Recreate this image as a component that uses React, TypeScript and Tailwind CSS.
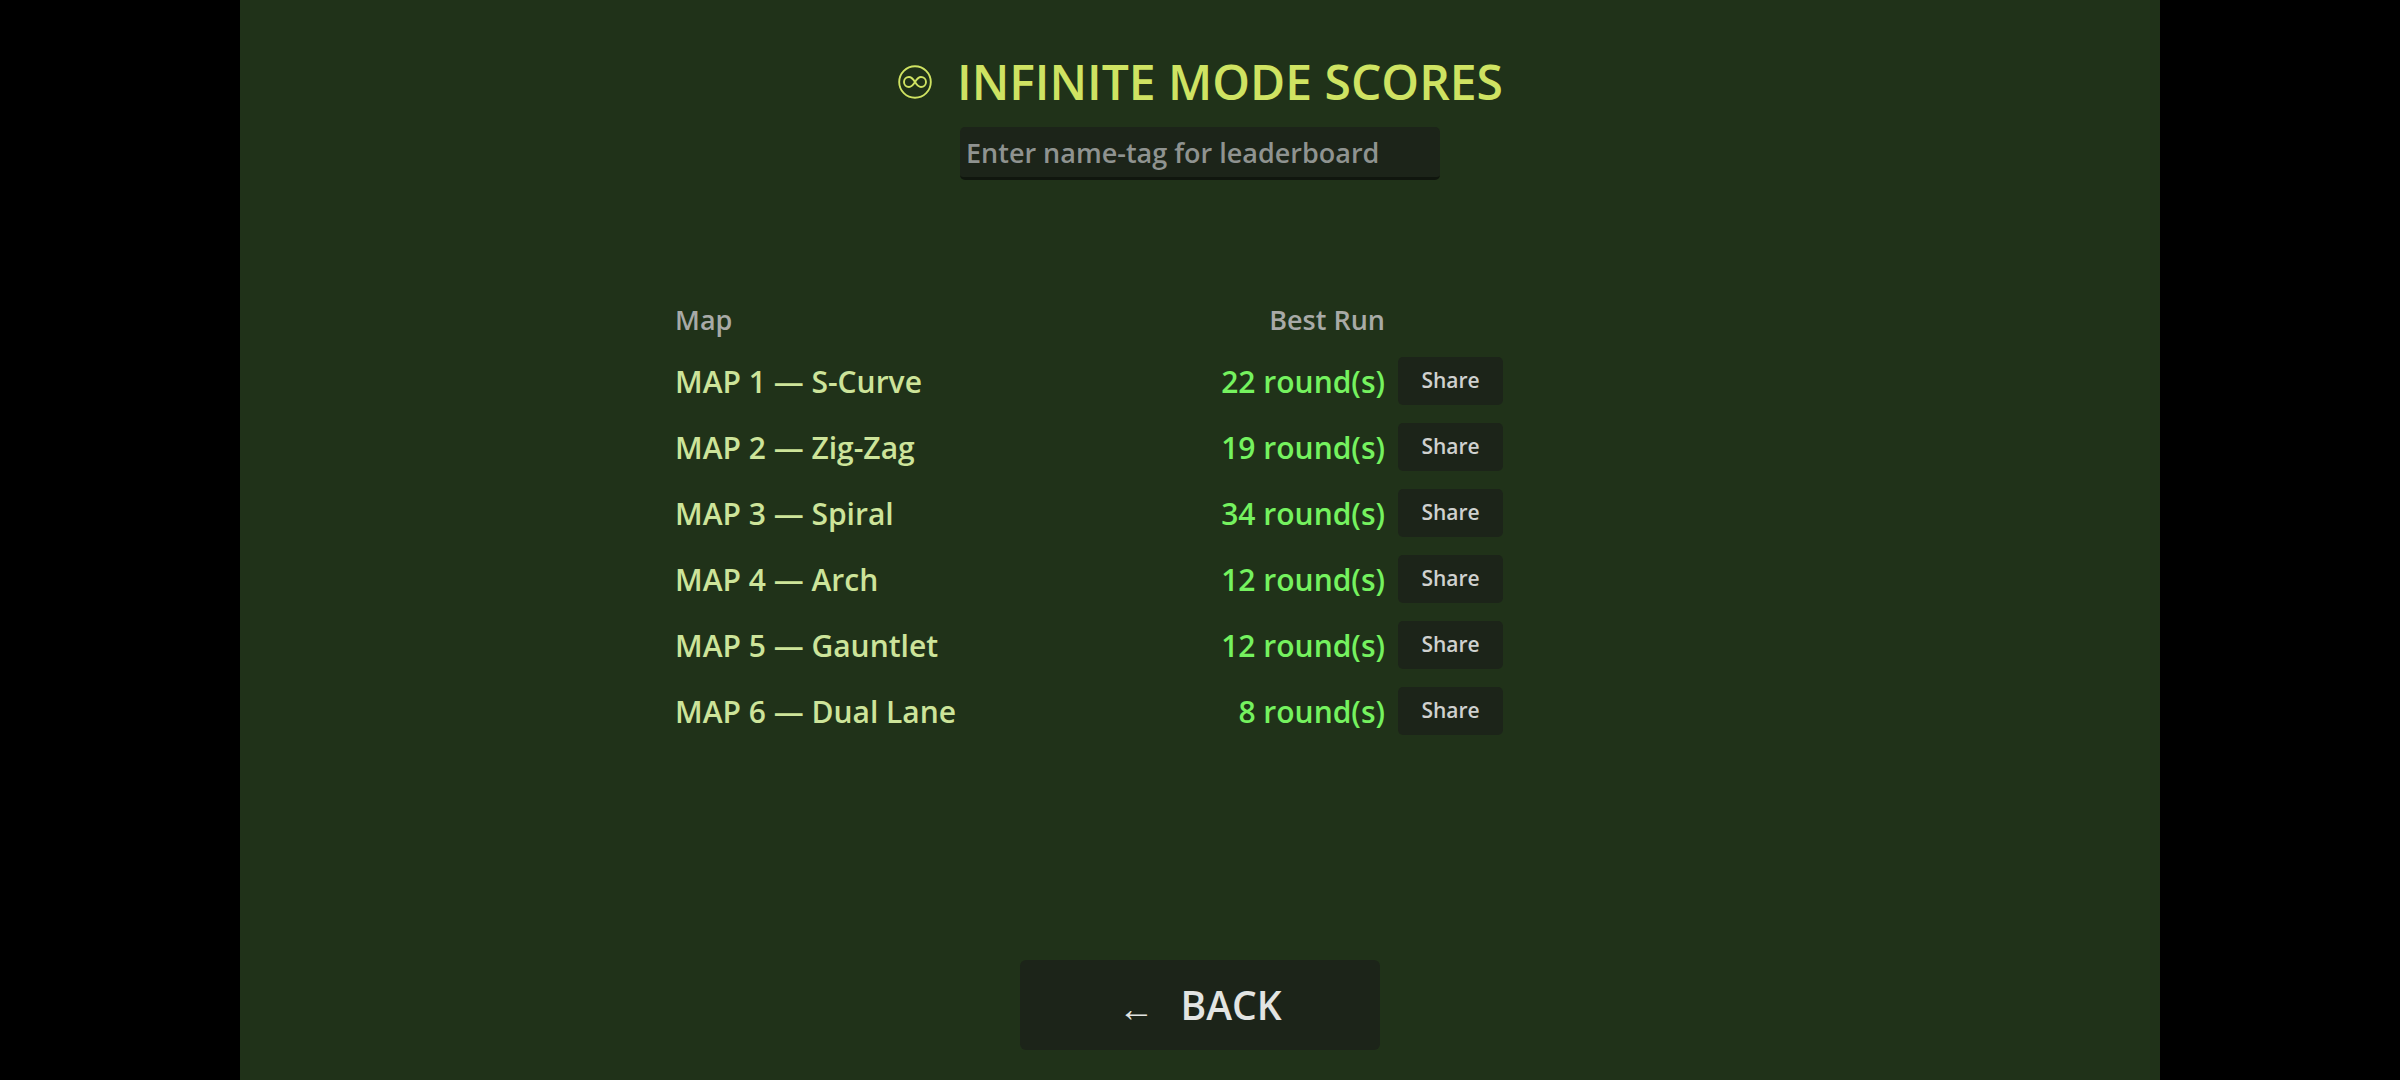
const scores = [
  { name: "MAP 1 — S-Curve", best: "22 round(s)" },
  { name: "MAP 2 — Zig-Zag", best: "19 round(s)" },
  { name: "MAP 3 — Spiral", best: "34 round(s)" },
  { name: "MAP 4 — Arch", best: "12 round(s)" },
  { name: "MAP 5 — Gauntlet", best: "12 round(s)" },
  { name: "MAP 6 — Dual Lane", best: "8 round(s)" },
];

function InfinityBadge() {
  return (
    <svg width="34" height="34" viewBox="0 0 34 34" fill="none" stroke="#cfe362" strokeWidth="1.9" className="shrink-0">
      <circle cx="17" cy="17" r="15.8" />
      <path d="M17 17c-2-3.2-3.6-5-6-5a5 5 0 0 0 0 10c2.4 0 4-1.8 6-5s3.6-5 6-5a5 5 0 0 1 0 10c-2.4 0-4-1.8-6-5z" />
    </svg>
  );
}

export default function App() {
  return (
    <div className="flex h-[1080px] w-[2400px] justify-center overflow-hidden bg-black font-['Open_Sans',sans-serif]">
      <main className="flex h-full w-[1920px] flex-col items-center bg-[#203219]">
        <h1 className="mt-[50px] ml-[1px] flex h-[64px] items-center gap-[25px] text-[48px] leading-none font-semibold text-[#cfe362]">
          <InfinityBadge />
          INFINITE MODE SCORES
        </h1>
        <input
          className="mt-[13px] h-[53px] w-[480px] rounded-[5px] border-b-[3px] border-[#10160e] bg-[#1c2419] px-[6px] pt-[1px] text-[27px] font-semibold text-white outline-none placeholder:text-[#8f9390]"
          placeholder="Enter name-tag for leaderboard"
        />
        <div className="mt-[116px] ml-[435px] w-[828px] self-start">
          <div className="mb-[13px] flex h-[48px] items-center text-[27px] font-semibold text-[#a8aaa7]">
            <span className="flex-1">Map</span>
            <span className="mr-[118px]">Best Run</span>
          </div>
          {scores.map((score) => (
            <div key={score.name} className="mb-[18px] flex h-[48px] items-center text-[30px] font-semibold">
              <span className="flex-1 text-[#cde49a]">{score.name}</span>
              <span className="text-[#75f25f]">{score.best}</span>
              <button className="ml-[13px] h-[48px] w-[105px] rounded-[5px] bg-[#1c2419] pb-[1px] text-[21px] font-semibold text-[#cfd1cf]">Share</button>
            </div>
          ))}
        </div>
        <button className="mt-auto mb-[30px] flex h-[90px] w-[360px] items-center justify-center gap-[26px] rounded-[6px] bg-[#1c2419] text-[39px] font-semibold text-[#e2e4e2]">
          <span className="mt-[5px] text-[36px] leading-none font-medium">←</span>
          BACK
        </button>
      </main>
    </div>
  );
}
